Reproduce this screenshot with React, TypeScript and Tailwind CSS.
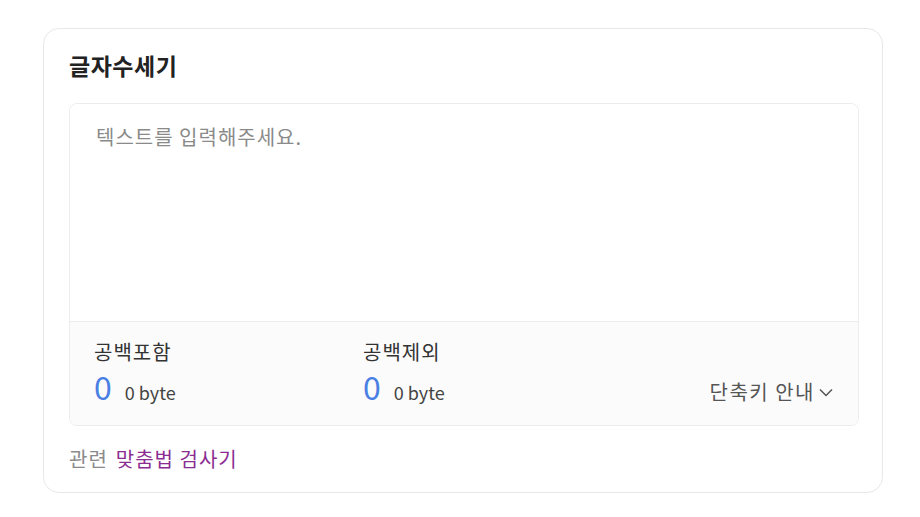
import React, { useState } from 'react';

const font = { fontFamily: '"Noto Sans CJK KR", "Noto Sans", sans-serif' };

function Stat({ label, count, bytes }: { label: string; count: number; bytes: number }) {
  return (
    <div className="w-[269px]">
      <p className="text-[20px] leading-[26px] tracking-[1px] text-[#333]">{label}</p>
      <div className="mt-[6px] flex items-baseline">
        <span className="text-[32px] leading-[30px] text-[#4a7fe3]">{count}</span>
        <span className="ml-[13px] text-[18px] leading-[30px] text-[#444]">{bytes} byte</span>
      </div>
    </div>
  );
}

export default function App() {
  const [text, setText] = useState('');
  const withSpace = text.length;
  const noSpace = text.replace(/\s/g, '').length;
  const bytesWith = new TextEncoder().encode(text).length;
  const bytesNo = new TextEncoder().encode(text.replace(/\s/g, '')).length;

  return (
    <div className="min-h-[517px] bg-white pt-[28px] pl-[43px]" style={font}>
      <div className="w-[840px] h-[465px] rounded-2xl border border-[#e8e8e8] px-[25px]">
        <h1 className="pt-[20px] text-[23px] leading-[32px] tracking-[0.5px] font-bold text-[#222]">글자수세기</h1>

        <div className="mt-[22px] w-[790px] rounded-lg border border-[#ececec] overflow-hidden">
          <textarea
            value={text}
            onChange={(e) => setText(e.target.value)}
            placeholder="텍스트를 입력해주세요."
            className="block w-full h-[217px] resize-none px-[26px] pt-[20px] text-[20px] leading-[26px] tracking-[1px] text-[#333] placeholder:text-[#8a8a8a] outline-none bg-white"
          />
          <div className="h-[104px] border-t border-[#ececec] bg-[#fbfbfb] pl-[24px] pr-[24px] pt-[17px] flex items-start">
            <Stat label="공백포함" count={withSpace} bytes={bytesWith} />
            <Stat label="공백제외" count={noSpace} bytes={bytesNo} />
            <button className="ml-auto mt-[40px] flex items-center gap-[3px] text-[20px] leading-[26px] tracking-[1.5px] text-[#555]">
              단축키 안내
              <svg width="16" height="16" viewBox="0 0 16 16" fill="none" stroke="#555" strokeWidth="1.5">
                <path d="M2 5.5l6 6 6-6" />
              </svg>
            </button>
          </div>
        </div>

        <p className="mt-[20px] text-[20px] leading-[26px] tracking-[1px]">
          <span className="text-[#8a8a8a]">관련</span>
          <a className="ml-[8px] text-[#8b2c92]">맞춤법 검사기</a>
        </p>
      </div>
    </div>
  );
}
